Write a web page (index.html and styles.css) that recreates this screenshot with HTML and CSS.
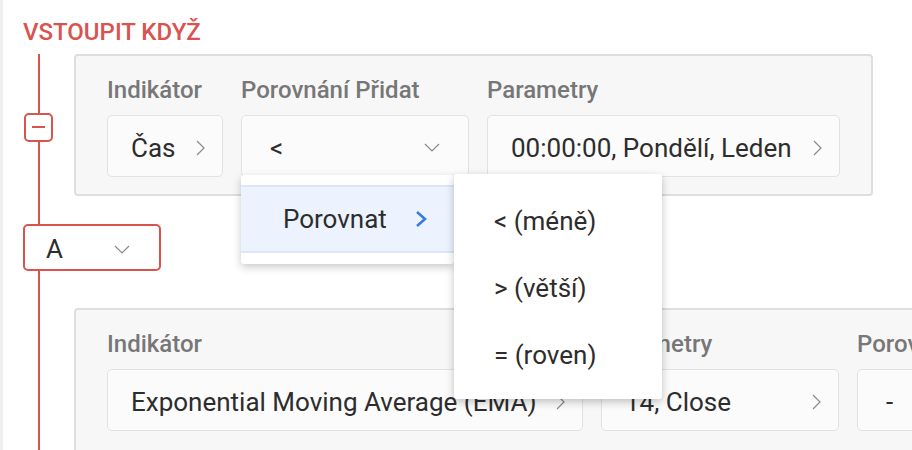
FILE: index.html
```html
<!DOCTYPE html>
<html>
<head>
  <title>Strategie - Vstupní podmínky</title>
  <link rel="stylesheet" href="styles.css">
</head>
<body>
  <div class="page">
    <h2 class="section-title">VSTOUPIT KDYŽ</h2>

    <div class="tree">
      <div class="cond-row">
        <div class="rail">
          <button class="toggle"><span class="minus"></span></button>
        </div>
        <div class="card">
          <div class="field-group">
            <div class="field-label">Indikátor</div>
            <div class="field field-small">
              <span>Čas</span>
              <svg class="chev-right" width="9" height="16" viewBox="0 0 9 16"><polyline points="1,1 8,8 1,15" /></svg>
            </div>
          </div>
          <div class="field-group">
            <div class="field-label">Porovnání Přidat</div>
            <div class="field field-compare">
              <span>&lt;</span>
              <svg class="chev-down" width="16" height="9" viewBox="0 0 16 9"><polyline points="1,1 8,8 15,1" /></svg>

              <!-- otevřené menu -->
              <div class="menu">
                <div class="menu-item active">
                  <span>Porovnat</span>
                  <svg class="chev-blue" width="13" height="18" viewBox="0 0 13 18"><polyline points="2,2 10,9 2,16" /></svg>
                </div>
                <div class="submenu">
                  <div class="submenu-item">&lt; (méně)</div>
                  <div class="submenu-item">&gt; (větší)</div>
                  <div class="submenu-item">= (roven)</div>
                </div>
              </div>
            </div>
          </div>
          <div class="field-group">
            <div class="field-label">Parametry</div>
            <div class="field field-params">
              <span>00:00:00, Pondělí, Leden</span>
              <svg class="chev-right" width="9" height="16" viewBox="0 0 9 16"><polyline points="1,1 8,8 1,15" /></svg>
            </div>
          </div>
        </div>
      </div>

      <div class="join-row">
        <div class="join-select">
          <span>A</span>
          <svg class="chev-down" width="16" height="9" viewBox="0 0 16 9"><polyline points="1,1 8,8 15,1" /></svg>
        </div>
      </div>

      <div class="cond-row second">
        <div class="rail"></div>
        <div class="card tall">
          <div class="field-group">
            <div class="field-label">Indikátor</div>
            <div class="field field-wide">
              <span>Exponential Moving Average (EMA)</span>
              <svg class="chev-right" width="9" height="16" viewBox="0 0 9 16"><polyline points="1,1 8,8 1,15" /></svg>
            </div>
          </div>
          <div class="field-group">
            <div class="field-label">Parametry</div>
            <div class="field field-mid">
              <span>14, Close</span>
              <svg class="chev-right" width="9" height="16" viewBox="0 0 9 16"><polyline points="1,1 8,8 1,15" /></svg>
            </div>
          </div>
          <div class="field-group">
            <div class="field-label">Porov</div>
            <div class="field field-last">
              <span>-</span>
            </div>
          </div>
        </div>
      </div>
    </div>
  </div>
</body>
</html>
```

FILE: styles.css
```css
html, body {
  margin: 0;
  padding: 0;
  height: 100%;
  overflow: hidden;
}

body {
  background-color: #fff;
  font-family: Roboto, "Liberation Sans", sans-serif;
  color: #2d2d2d;
}

.page {
  border-left: 3px solid #efefef;
  padding: 18px 0 0 20px;
  min-height: 100%;
  box-sizing: border-box;
}

.section-title {
  margin: 0 0 8px 0;
  font-size: 24px;
  line-height: 28px;
  font-weight: 500;
  color: #d9534f;
}

.tree {
  position: relative;
  height: 400px;
}

.tree::before {
  content: '';
  position: absolute;
  left: 15px;
  top: 0;
  bottom: 0;
  width: 2px;
  background-color: #d9534f;
}

.cond-row {
  display: flex;
  align-items: center;
}

.cond-row.second {
  margin-top: 37px;
}

.rail {
  width: 51px;
  flex-shrink: 0;
}

.toggle {
  position: relative;
  z-index: 1;
  display: flex;
  align-items: center;
  justify-content: center;
  width: 29px;
  height: 29px;
  margin: 4px 0 0 1px;
  padding: 0;
  border: 2px solid #d9534f;
  border-radius: 5px;
  background-color: #fff;
}

.minus {
  width: 13px;
  height: 2px;
  background-color: #d9534f;
}

.card {
  display: flex;
  gap: 18px;
  flex-shrink: 0;
  padding: 20px 31px 17px;
  background-color: #f7f7f7;
  border: 2px solid #dedede;
  border-radius: 4px;
}

.card.tall {
  padding-bottom: 40px;
}

.field-label {
  font-size: 24px;
  line-height: 28px;
  font-weight: 500;
  color: #777;
  margin-bottom: 11px;
  white-space: nowrap;
}

.field {
  position: relative;
  display: flex;
  align-items: center;
  justify-content: space-between;
  box-sizing: border-box;
  height: 62px;
  padding: 3px 17px 0 23px;
  background-color: #fbfbfb;
  border: 1.5px solid #e2e2e2;
  border-radius: 5px;
  font-size: 26px;
  white-space: nowrap;
}

.field-small { width: 116px; }
.field-compare { width: 228px; padding-right: 28px; padding-left: 28px; }
.field-params { width: 353px; }
.field-wide { width: 476px; }
.field-mid { width: 238px; }
.field-last { width: 120px; padding-left: 28px; }

.chev-right polyline,
.chev-down polyline {
  fill: none;
  stroke: #8a8a8a;
  stroke-width: 1.2;
}

.menu {
  position: absolute;
  z-index: 10;
  top: 59px;
  left: -1px;
  width: 213px;
  padding: 10px 0 11px;
  background-color: #fff;
  border-radius: 3px;
  box-shadow: 0 3px 8px rgba(0, 0, 0, 0.22);
}

.menu-item {
  display: flex;
  align-items: center;
  justify-content: space-between;
  height: 64px;
  padding: 0 26px 0 42px;
  background-color: #ecf3fe;
  border-top: 2px solid #dbe7f8;
  border-bottom: 2px solid #dbe7f8;
  font-size: 26px;
}

.chev-blue polyline {
  fill: none;
  stroke: #3a7bdc;
  stroke-width: 2.6;
}

.submenu {
  position: absolute;
  top: -1px;
  left: 213px;
  width: 208px;
  padding: 14px 0 10px;
  background-color: #fff;
  border-radius: 3px;
  box-shadow: 0 3px 9px rgba(0, 0, 0, 0.24);
}

.submenu-item {
  height: 67px;
  line-height: 67px;
  padding-left: 40px;
  font-size: 26px;
}

.join-row {
  margin-top: 28px;
}

.join-select {
  position: relative;
  z-index: 1;
  display: flex;
  align-items: center;
  justify-content: space-between;
  box-sizing: border-box;
  width: 138px;
  height: 47px;
  padding: 3px 29px 0 21px;
  background-color: #fff;
  border: 2px solid #d9534f;
  border-radius: 5px;
  font-size: 26px;
}
```
